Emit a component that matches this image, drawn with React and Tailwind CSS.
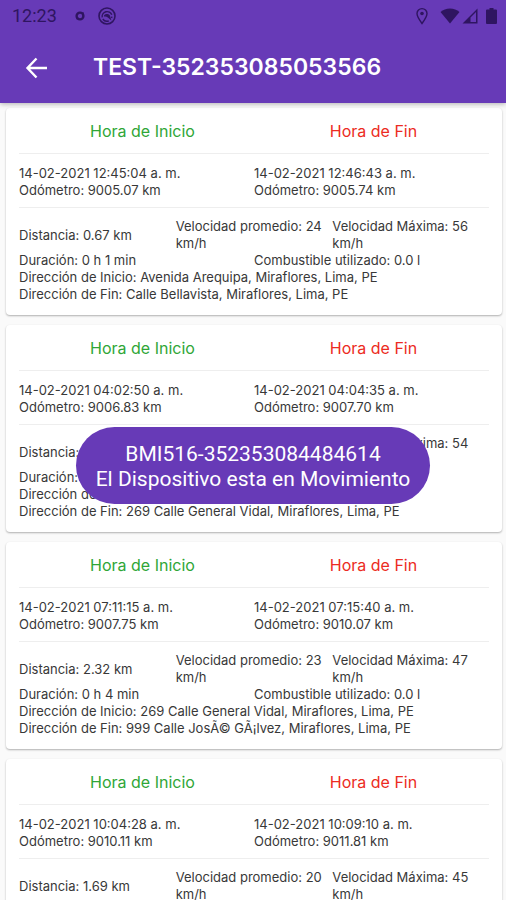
import React from "react";

const trips = [
  {
    id: 1,
    start: "14-02-2021 12:45:04 a. m.",
    startOdometer: "9005.07 km",
    end: "14-02-2021 12:46:43 a. m.",
    endOdometer: "9005.74 km",
    distance: "0.67 km",
    avgSpeed: "24 km/h",
    maxSpeed: "56 km/h",
    duration: "0 h 1 min",
    fuel: "0.0 l",
    from: "Avenida Arequipa, Miraflores, Lima, PE",
    to: "Calle Bellavista, Miraflores, Lima, PE",
  },
  {
    id: 2,
    start: "14-02-2021 04:02:50 a. m.",
    startOdometer: "9006.83 km",
    end: "14-02-2021 04:04:35 a. m.",
    endOdometer: "9007.70 km",
    distance: "0.87 km",
    avgSpeed: "25 km/h",
    maxSpeed: "54 km/h",
    duration: "0 h 1 min",
    fuel: "0.0 l",
    from: "Calle Bellavista, Miraflores",
    to: "269 Calle General Vidal, Miraflores, Lima, PE",
  },
  {
    id: 3,
    start: "14-02-2021 07:11:15 a. m.",
    startOdometer: "9007.75 km",
    end: "14-02-2021 07:15:40 a. m.",
    endOdometer: "9010.07 km",
    distance: "2.32 km",
    avgSpeed: "23 km/h",
    maxSpeed: "47 km/h",
    duration: "0 h 4 min",
    fuel: "0.0 l",
    from: "269 Calle General Vidal, Miraflores, Lima, PE",
    to: "999 Calle JosÃ© GÃ¡lvez, Miraflores, Lima, PE",
  },
  {
    id: 4,
    start: "14-02-2021 10:04:28 a. m.",
    startOdometer: "9010.11 km",
    end: "14-02-2021 10:09:10 a. m.",
    endOdometer: "9011.81 km",
    distance: "1.69 km",
    avgSpeed: "20 km/h",
    maxSpeed: "45 km/h",
    duration: "0 h 4 min",
    fuel: "0.0 l",
    from: "999 Calle JosÃ© GÃ¡lvez, Miraflores, Lima, PE",
    to: "Miraflores, Lima, PE",
  },
];

const StatusBar = () => (
  <div className="flex h-8 items-center justify-between pl-3 pr-2 text-[#2f1561]">
    <div className="flex items-center">
      <span className="w-[62px] font-['Roboto',sans-serif] text-lg leading-8">12:23</span>
      <svg className="h-3 w-3" viewBox="0 0 12 12" fill="none" stroke="currentColor" strokeWidth="2.4">
        <circle cx="6" cy="6" r="3.4" />
        <path d="M9 2.2v2M2.6 9.2l1-1" strokeWidth="1.4" />
      </svg>
      <svg className="ml-3 h-[18px] w-[18px]" viewBox="0 0 18 18" fill="none" stroke="currentColor">
        <circle cx="9" cy="9" r="8" strokeWidth="1.6" />
        <path d="M4.2 10.400A5 5 0 0 1 13.800 7.800M13.900 9.600a5 5 0 0 1-.4 1.400M4.800 12a5 5 0 0 0 6 1.800" strokeWidth="1.4" />
        <path d="M6 8.400C7.800 6.200 11 6.600 12 8.800l1.400 4.600L9.800 10.400C8.800 9.600 7.600 9.400 6 9.600z" fill="currentColor" stroke="none" />
      </svg>
    </div>
    <div className="flex items-center">
      <svg className="h-[18px] w-3" viewBox="0 0 12 18" fill="none" stroke="currentColor" strokeWidth="1.4">
        <path d="M6 16.500C3.200 12.800 1 9.800 1 6.600a5 5 0 0 1 10 0c0 3.200-2.200 6.200-5 9.900z" />
        <circle cx="6" cy="6.500" r="1.800" fill="currentColor" stroke="none" />
      </svg>
      <svg className="ml-3 h-4 w-5" viewBox="0 0 20 16" fill="currentColor">
        <path d="M10 15.500L.5 4C3 1.800 6.400.5 10 .5S17 1.800 19.500 4z" />
      </svg>
      <svg className="ml-0.5 h-4 w-4" viewBox="0 0 16 16" fill="currentColor">
        <path d="M15.500.5v15H.5zM14 4L8.500 9.600V14H14z" fillRule="evenodd" />
      </svg>
      <svg className="ml-2 mr-px h-[18px] w-[11px]" viewBox="0 0 11 18" fill="currentColor">
        <path d="M3.500 1h4v1.500H10q1 0 1 1V16q0 1-1 1H1q-1 0-1-1V3.500q0-1 1-1h2.500z" />
      </svg>
    </div>
  </div>
);

const TripCard = ({ trip }) => (
  <article className="rounded bg-white px-[13px] pb-3 text-[13px] leading-[17px] text-[#383838] shadow-[0_1px_2px_rgba(0,0,0,0.3)]">
    <div className="grid h-[46px] grid-cols-2 items-center border-b border-[#eeeeee] pl-2 pt-px text-center text-base">
      <h2 className="text-[#2fa637]">Hora de Inicio</h2>
      <h2 className="text-[#ec2b22]">Hora de Fin</h2>
    </div>

    <div className="grid grid-cols-2 border-b border-[#eeeeee] pb-2 pt-[11px]">
      <div>
        <p>{trip.start}</p>
        <p>{`Odómetro: ${trip.startOdometer}`}</p>
      </div>
      <div>
        <p>{trip.end}</p>
        <p>{`Odómetro: ${trip.endOdometer}`}</p>
      </div>
    </div>

    <div className="grid grid-cols-3 items-center pt-[10px]">
      <p>{`Distancia: ${trip.distance}`}</p>
      <p>{`Velocidad promedio: ${trip.avgSpeed}`}</p>
      <p>{`Velocidad Máxima: ${trip.maxSpeed}`}</p>
    </div>
    <div className="grid grid-cols-2">
      <p>{`Duración: ${trip.duration}`}</p>
      <p>{`Combustible utilizado: ${trip.fuel}`}</p>
    </div>
    <p>{`Dirección de Inicio: ${trip.from}`}</p>
    <p>{`Dirección de Fin: ${trip.to}`}</p>
  </article>
);

const App = () => {
  return (
    <div className="relative flex h-screen flex-col overflow-hidden bg-[#fafafa] font-['Inter',sans-serif]">
      <header className="relative z-10 bg-[#673ab7] shadow-[0_1px_5px_rgba(0,0,0,0.3)]">
        <StatusBar />
        <div className="flex h-[71px] items-center px-6">
          <button type="button" aria-label="Volver" className="text-white">
            <svg className="h-6 w-6" viewBox="0 0 24 24" fill="none" stroke="currentColor" strokeWidth="2.4">
              <path d="M23 12H4M12.500 2.500L3.500 12l9 9.500" />
            </svg>
          </button>
          <h1 className="ml-[45px] text-[23px] font-semibold text-white">TEST-352353085053566</h1>
        </div>
      </header>

      <main className="flex-1 space-y-[10px] overflow-y-auto pb-2 pl-1.5 pr-1 pt-[5px] [scrollbar-width:none]">
        {trips.map((trip) => (
          <TripCard key={trip.id} trip={trip} />
        ))}
      </main>

      {/* Device notification toast */}
      <div className="pointer-events-none absolute inset-x-0 bottom-[44%] z-20 flex justify-center">
        <div
          role="status"
          className="rounded-full bg-[#673ab7] px-5 pb-3 pt-[15px] text-center font-['Roboto',sans-serif] text-[21px] leading-[25px] text-white"
        >
          <p>BMI516-352353084484614</p>
          <p>El Dispositivo esta en Movimiento</p>
        </div>
      </div>
    </div>
  );
};

export default App;
